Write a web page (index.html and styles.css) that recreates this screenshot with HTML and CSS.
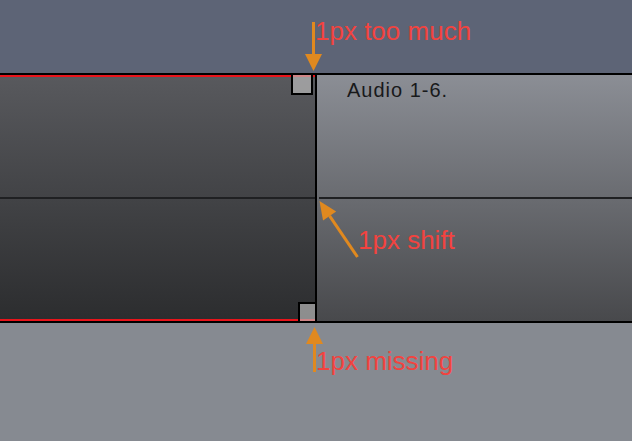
FILE: index.html
```html
<!DOCTYPE html>
<html lang="en">
<head>
<meta charset="utf-8">
<title>Track header alignment</title>
<link rel="stylesheet" href="styles.css">
</head>
<body>
<div class="page">
  <div class="band band-top"></div>
  <div class="tracks">
    <div class="col col-left">
      <div class="cell cell-upper"></div>
      <div class="cell cell-lower"></div>
    </div>
    <div class="divider"></div>
    <div class="col col-right">
      <div class="cell cell-upper"><span class="track-name">Audio 1-6.</span></div>
      <div class="cell cell-lower"></div>
    </div>
    <span class="handle handle-top"></span>
    <span class="handle handle-bottom"></span>
  </div>
  <div class="band band-bottom"></div>

  <svg class="arrows" width="632" height="441" viewBox="0 0 632 441">
    <g fill="#e0891f" stroke="#e0891f" stroke-width="3">
      <line x1="313.5" y1="22" x2="313.5" y2="56"/>
      <polygon stroke="none" points="305,54 322,54 313.5,71"/>
      <line x1="329.6" y1="215.9" x2="357.5" y2="257"/>
      <polygon stroke="none" points="319.5,201 323,220.4 336.2,211.4"/>
      <line x1="314.5" y1="342" x2="314.5" y2="372"/>
      <polygon stroke="none" points="306,344 323,344 314.5,327"/>
    </g>
  </svg>
  <span class="note note-much">1px too much</span>
  <span class="note note-shift">1px shift</span>
  <span class="note note-missing">1px missing</span>
</div>
</body>
</html>
```

FILE: styles.css
```css
html, body {
  margin: 0;
  padding: 0;
}

body {
  width: 632px;
  height: 441px;
  overflow: hidden;
  font-family: "Liberation Sans", Arial, sans-serif;
}

.page {
  position: relative;
  display: flex;
  flex-direction: column;
  width: 632px;
  height: 441px;
}

.band-top {
  height: 73px;
  background: #5d6476;
}

.band-bottom {
  flex: 1;
  background: #868a91;
}

.tracks {
  position: relative;
  display: flex;
  border-top: 2px solid #000;
  border-bottom: 2px solid #000;
  height: 246px;
}

.col {
  display: flex;
  flex-direction: column;
  width: 315px;
}

.col-left {
  border-top: 2px solid #e9141b;
  border-bottom: 2px solid #e9141b;
  background: linear-gradient(#58595d, #2c2d2f);
}

.col-left .cell-upper {
  height: 120px;
}

.col-left .cell-lower {
  height: 120px;
  border-top: 2px solid #1f2022;
}

.divider {
  width: 2px;
  background: #000;
}

.col-right {
  background: linear-gradient(#8b8e95, #48494c);
}

.col-right .cell-upper {
  height: 122px;
  box-sizing: border-box;
  padding: 5px 0 0 30px;
}

.col-right .cell-lower {
  height: 122px;
  margin-left: 2px;
  border-top: 2px solid #1f2022;
}

.track-name {
  display: block;
  font-size: 20px;
  line-height: 1;
  letter-spacing: 1px;
  color: #18191b;
}

.handle {
  position: absolute;
  box-sizing: border-box;
  border: 2px solid #000;
  background: rgba(194, 194, 194, 0.65);
}

.handle-top {
  left: 291px;
  top: -2px;
  width: 22px;
  height: 22px;
}

.handle-bottom {
  left: 298px;
  top: 227px;
  width: 19px;
  height: 21px;
}

.arrows {
  position: absolute;
  left: 0;
  top: 0;
}

.note {
  position: absolute;
  font-size: 26px;
  line-height: 1;
  color: #f2433f;
  white-space: nowrap;
}

.note-much {
  left: 315px;
  top: 18px;
}

.note-shift {
  left: 358px;
  top: 227px;
}

.note-missing {
  left: 316px;
  top: 348px;
}
```
